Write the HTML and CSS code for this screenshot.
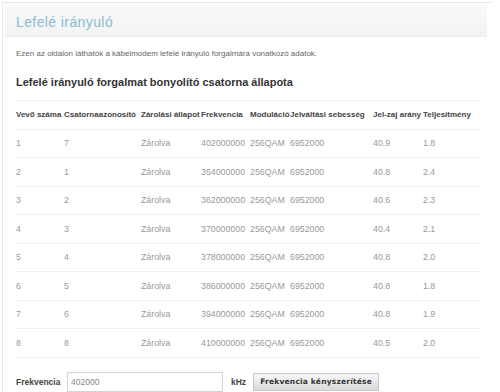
FILE: index.html
```html
<!DOCTYPE html>
<html lang="hu">
<head>
<meta charset="utf-8">
<link rel="stylesheet" href="styles.css">
</head>
<body>
<div class="panel">
  <div class="panel-head"><h1 class="title">Lefelé irányuló</h1></div>
  <div class="panel-body">
    <p class="desc">Ezen az oldalon láthatók a kábelmodem lefelé irányuló forgalmára vonatkozó adatok.</p>
    <h2 class="subtitle">Lefelé irányuló forgalmat bonyolító csatorna állapota</h2>
    <table class="chan">
      <colgroup>
        <col class="c1"><col class="c2"><col class="c3"><col class="c4"><col class="c5"><col class="c6"><col class="c7"><col class="c8">
      </colgroup>
      <thead>
        <tr><th>Vevő száma</th><th>Csatornaazonosító</th><th>Zárolási állapot</th><th>Frekvencia</th><th>Moduláció</th><th>Jelváltási sebesség</th><th>Jel-zaj arány</th><th>Teljesítmény</th></tr>
      </thead>
      <tbody>
        <tr><td>1</td><td>7</td><td>Zárolva</td><td>402000000</td><td>256QAM</td><td>6952000</td><td>40.9</td><td>1.8</td></tr>
        <tr><td>2</td><td>1</td><td>Zárolva</td><td>354000000</td><td>256QAM</td><td>6952000</td><td>40.8</td><td>2.4</td></tr>
        <tr><td>3</td><td>2</td><td>Zárolva</td><td>362000000</td><td>256QAM</td><td>6952000</td><td>40.6</td><td>2.3</td></tr>
        <tr><td>4</td><td>3</td><td>Zárolva</td><td>370000000</td><td>256QAM</td><td>6952000</td><td>40.4</td><td>2.1</td></tr>
        <tr><td>5</td><td>4</td><td>Zárolva</td><td>378000000</td><td>256QAM</td><td>6952000</td><td>40.8</td><td>2.0</td></tr>
        <tr><td>6</td><td>5</td><td>Zárolva</td><td>386000000</td><td>256QAM</td><td>6952000</td><td>40.8</td><td>1.8</td></tr>
        <tr><td>7</td><td>6</td><td>Zárolva</td><td>394000000</td><td>256QAM</td><td>6952000</td><td>40.8</td><td>1.9</td></tr>
        <tr><td>8</td><td>8</td><td>Zárolva</td><td>410000000</td><td>256QAM</td><td>6952000</td><td>40.5</td><td>2.0</td></tr>
      </tbody>
    </table>
    <form class="freq-form">
      <label class="freq-label" for="freq">Frekvencia</label>
      <input class="freq-input" id="freq" type="text" value="402000">
      <span class="unit">kHz</span>
      <button class="btn" type="button">Frekvencia kényszerítése</button>
    </form>
  </div>
</div>
</body>
</html>
```

FILE: styles.css
```css
html, body {
  margin: 0;
  padding: 0;
  background: #fff;
}
body {
  font-family: "Liberation Sans", Arial, sans-serif;
  color: #444;
  width: 500px;
  height: 392px;
  overflow: hidden;
}
.panel {
  margin: 2px 0 0 2px;
  width: 488px;
  border-top: 1px solid #e4e4e4;
  border-left: 1px solid #e8e8e8;
}
.panel-head {
  margin: 1px 0 0 2px;
  width: 482px;
  height: 33px;
  box-sizing: border-box;
  padding-top: 3px;
  background: linear-gradient(to bottom, #f9f9f9, #f3f3f3);
  border-bottom: 1px solid #ececec;
  display: flex;
  align-items: center;
}
.title {
  margin: 0 0 0 11px;
  font-size: 14px;
  font-weight: normal;
  letter-spacing: 0.4px;
  color: #8bbccd;
}
.panel-body {
  padding: 0 0 0 13px;
}
.desc {
  margin: 12px 0 0;
  font-size: 8px;
  color: #666;
}
.subtitle {
  margin: 18px 0 0;
  font-size: 11px;
  font-weight: bold;
  color: #333;
}
.chan {
  margin-top: 12px;
  border-collapse: collapse;
  table-layout: fixed;
  width: 464px;
}
.c1 { width: 48px; }
.c2 { width: 77px; }
.c3 { width: 60px; }
.c4 { width: 49px; }
.c5 { width: 40px; }
.c6 { width: 83px; }
.c7 { width: 50px; }
.c8 { width: 57px; }
.chan th, .chan td {
  padding: 0;
  text-align: left;
  white-space: nowrap;
  height: 27.5px;
  border-top: 1px solid #efefef;
  border-bottom: 1px solid #efefef;
}
.chan th {
  font-size: 8px;
  font-weight: bold;
  color: #444;
}
.chan td {
  font-size: 8.8px;
  color: #999;
}
.freq-form {
  margin-top: 14px;
  display: flex;
  align-items: center;
}
.freq-label {
  width: 51px;
  font-size: 8.5px;
  font-weight: bold;
  color: #444;
}
.freq-input {
  box-sizing: border-box;
  width: 156px;
  height: 20px;
  margin: 0;
  padding: 0 3px;
  border: 1px solid #d4d4d4;
  font-family: "Liberation Sans", Arial, sans-serif;
  font-size: 8.5px;
  color: #888;
}
.unit {
  margin-left: 8px;
  font-size: 8.5px;
  font-weight: bold;
  color: #444;
}
.btn {
  margin-left: 7px;
  box-sizing: border-box;
  width: 126px;
  height: 18px;
  padding: 0;
  border: 1px solid #c8c8c8;
  background: linear-gradient(to bottom, #f8f8f8, #d9d9d9);
  font-family: "DejaVu Sans", sans-serif;
  font-size: 7.5px;
  font-weight: bold;
  letter-spacing: 0.2px;
  color: #333;
}
```
